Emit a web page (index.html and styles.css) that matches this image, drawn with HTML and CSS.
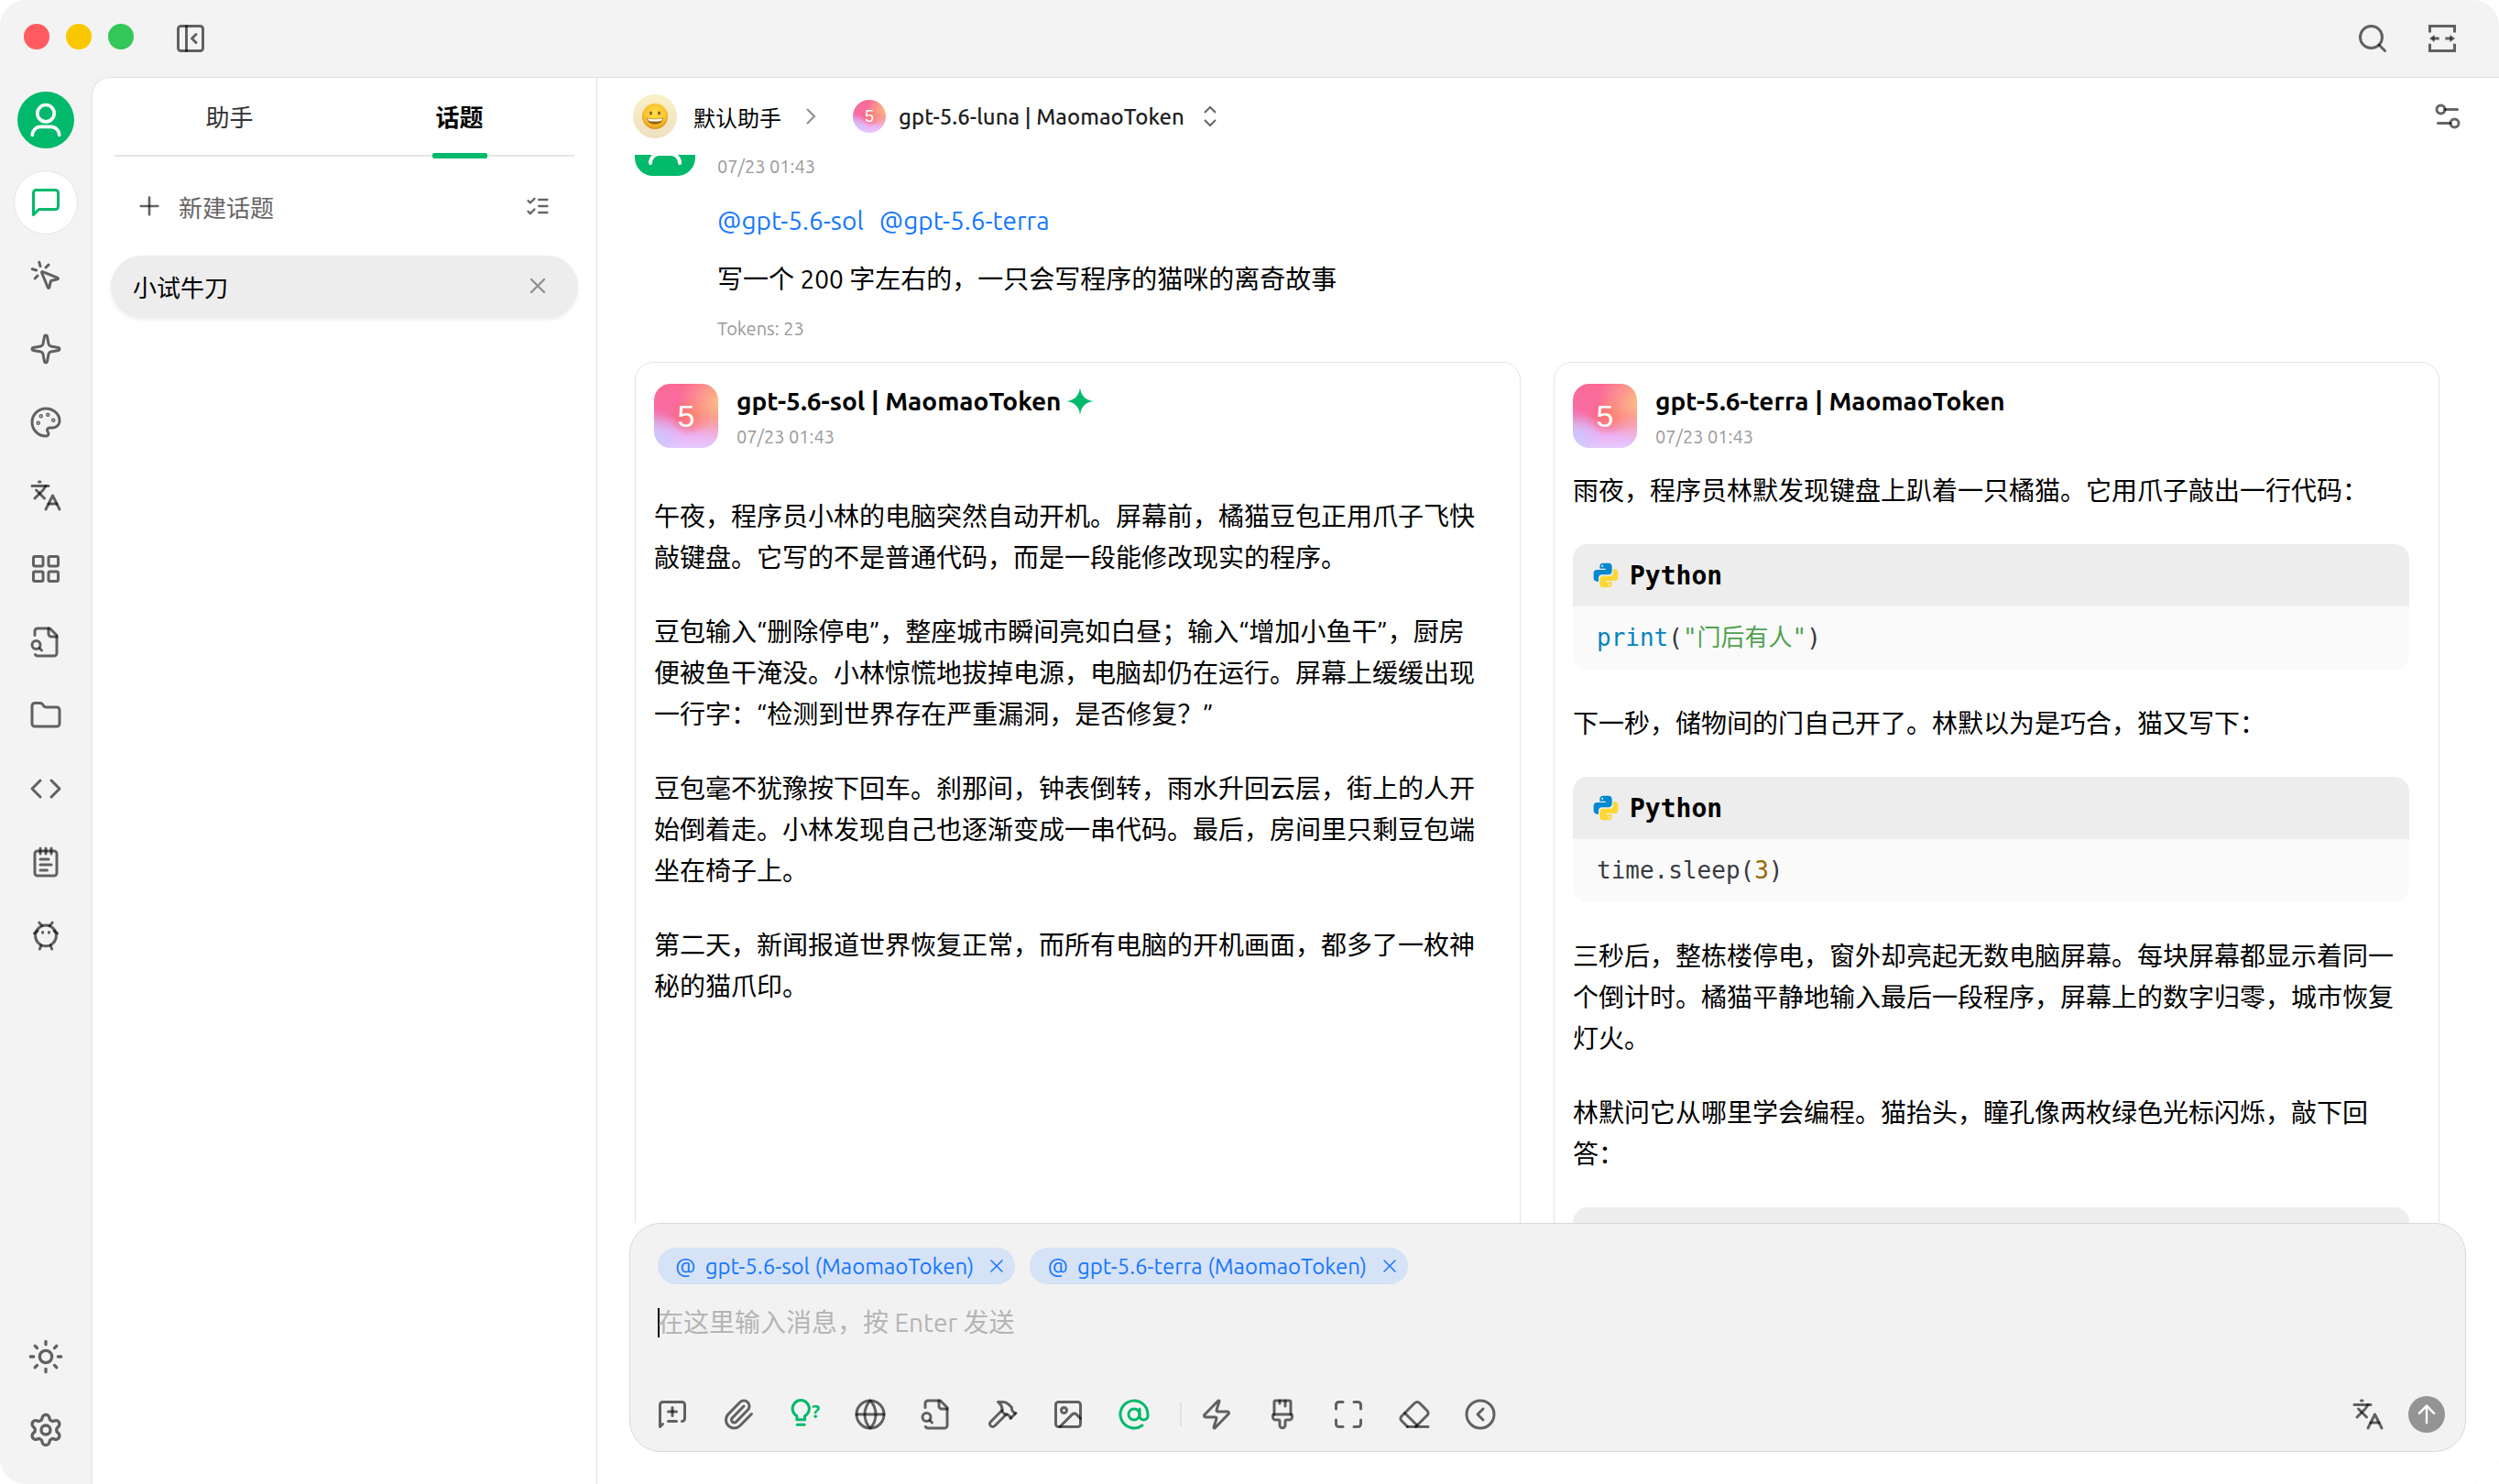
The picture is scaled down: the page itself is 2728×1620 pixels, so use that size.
FILE: index.html
```html
<!DOCTYPE html>
<html lang="zh-CN">
<head>
    <meta charset="UTF-8">
    <meta name="viewport" content="width=device-width, initial-scale=1.0">
    <title>小试牛刀</title>
    <link rel="stylesheet" href="styles.css">
</head>
<body>
    <!-- shared icons -->
    <svg class="sprite" aria-hidden="true">
        <symbol id="i-translate" viewBox="0 0 24 24"><path d="m5 8 6 6"/><path d="m4 14 6-6 2-3"/><path d="M2 5h12"/><path d="M7 2h1"/><path d="m22 22-5-10-5 10"/><path d="M14 18h6"/></symbol>
        <symbol id="i-file-search" viewBox="0 0 24 24"><path d="M14 2v4a2 2 0 0 0 2 2h4"/><path d="M4.268 21a2 2 0 0 0 1.727 1H18a2 2 0 0 0 2-2V7l-5-5H6a2 2 0 0 0-2 2v3"/><path d="m9 18-1.5-1.5"/><circle cx="5" cy="14" r="3"/></symbol>
        <symbol id="i-user" viewBox="0 0 24 24"><circle cx="12" cy="8" r="5"/><path d="M20 21a5 5 0 0 0-5-5H9a5 5 0 0 0-5 5"/></symbol>
        <symbol id="i-close" viewBox="0 0 24 24"><path d="M18 6 6 18M6 6l12 12"/></symbol>
        <symbol id="i-python" viewBox="0 0 24 24"><path fill="#0288d1" d="M9.86 2A2.86 2.86 0 0 0 7 4.86v1.68h4.29c.39 0 .71.57.71.96H4.86A2.86 2.86 0 0 0 2 10.36v3.781a2.86 2.86 0 0 0 2.86 2.86h1.18v-2.68a2.85 2.85 0 0 1 2.85-2.86h5.25c1.58 0 2.86-1.271 2.86-2.851V4.86A2.86 2.86 0 0 0 14.14 2zm-.72 1.61c.4 0 .72.12.72.71s-.32.891-.72.891c-.39 0-.71-.3-.71-.89s.32-.711.71-.711z"/><path fill="#fdd835" d="M17.959 7v2.68a2.85 2.85 0 0 1-2.85 2.859H9.86A2.85 2.85 0 0 0 7 15.389v3.75a2.86 2.86 0 0 0 2.86 2.86h4.28A2.86 2.86 0 0 0 17 19.14v-1.68h-4.291c-.39 0-.709-.57-.709-.96h7.14A2.86 2.86 0 0 0 22 13.64V9.86A2.86 2.86 0 0 0 19.14 7zm-3.099 11.789c.39 0 .71.3.71.89a.71.71 0 0 1-.71.71c-.4 0-.72-.12-.72-.71s.32-.89.72-.89z"/></symbol>
    </svg>

    <div class="window">
        <header class="titlebar">
            <div class="lights">
                <span class="light red"></span>
                <span class="light yellow"></span>
                <span class="light green"></span>
            </div>
            <button class="icon-btn" aria-label="收起侧边栏"><svg class="icon" viewBox="0 0 24 24"><rect x="3" y="3" width="18" height="18" rx="2"/><path d="M9 3v18"/><path d="m16 15-3-3 3-3"/></svg></button>
            <div class="titlebar-right">
                <button class="icon-btn" aria-label="搜索"><svg class="icon" viewBox="0 0 24 24"><circle cx="11" cy="11" r="8"/><path d="m21 21-4.3-4.3"/></svg></button>
                <button class="icon-btn" aria-label="宽屏"><svg class="icon square" viewBox="0 0 24 24"><path d="M3 7.6V3h18v4.6"/><path d="M3 15.8V21h18v-5.2"/><path d="M5 12h4.8M14.2 12H19"/><path class="solid" d="M2.6 12 6.4 9.4v5.2zM21.4 12l-3.8-2.6v5.2z"/></svg></button>
            </div>
        </header>

        <div class="body">
            <nav class="rail">
                <button class="me" aria-label="我"><svg class="icon" ><use href="#i-user"/></svg></button>
                <button class="rail-btn active" aria-label="聊天"><svg class="icon" viewBox="0 0 24 24"><path d="M21 15a2 2 0 0 1-2 2H7l-4 4V5a2 2 0 0 1 2-2h14a2 2 0 0 1 2 2z"/></svg></button>
                <button class="rail-btn" aria-label="智能体"><svg class="icon" viewBox="0 0 24 24"><path d="M14 4.1 12 6"/><path d="m5.1 8-2.9-.8"/><path d="m6 12-1.9 2"/><path d="M7.2 2.2 8 5.1"/><path d="M9.037 9.69a.498.498 0 0 1 .653-.653l11 4.5a.5.5 0 0 1-.074.949l-4.349 1.041a1 1 0 0 0-.74.739l-1.04 4.35a.5.5 0 0 1-.95.074z"/></svg></button>
                <button class="rail-btn" aria-label="助手库"><svg class="icon" viewBox="0 0 24 24"><path d="M11.017 2.814a1 1 0 0 1 1.966 0l1.051 5.558a2 2 0 0 0 1.594 1.594l5.558 1.051a1 1 0 0 1 0 1.966l-5.558 1.051a2 2 0 0 0-1.594 1.594l-1.051 5.558a1 1 0 0 1-1.966 0l-1.051-5.558a2 2 0 0 0-1.594-1.594l-5.558-1.051a1 1 0 0 1 0-1.966l5.558-1.051a2 2 0 0 0 1.594-1.594z"/></svg></button>
                <button class="rail-btn" aria-label="绘画"><svg class="icon" viewBox="0 0 24 24"><path d="M12 22a1 1 0 0 1 0-20 10 9 0 0 1 10 9 5 5 0 0 1-5 5h-2.25a1.75 1.75 0 0 0-1.4 2.8l.3.4a1.75 1.75 0 0 1-1.4 2.8z"/><circle cx="13.5" cy="6.5" r=".5"/><circle cx="17.5" cy="10.5" r=".5"/><circle cx="6.5" cy="12.5" r=".5"/><circle cx="8.5" cy="7.5" r=".5"/></svg></button>
                <button class="rail-btn" aria-label="翻译"><svg class="icon"><use href="#i-translate"/></svg></button>
                <button class="rail-btn" aria-label="小程序"><svg class="icon" viewBox="0 0 24 24"><rect x="3" y="3" width="7" height="7" rx="1"/><rect x="14" y="3" width="7" height="7" rx="1"/><rect x="14" y="14" width="7" height="7" rx="1"/><rect x="3" y="14" width="7" height="7" rx="1"/></svg></button>
                <button class="rail-btn" aria-label="知识库"><svg class="icon"><use href="#i-file-search"/></svg></button>
                <button class="rail-btn" aria-label="文件"><svg class="icon" viewBox="0 0 24 24"><path d="M20 20a2 2 0 0 0 2-2V8a2 2 0 0 0-2-2h-7.9a2 2 0 0 1-1.69-.9L9.6 3.9A2 2 0 0 0 7.93 3H4a2 2 0 0 0-2 2v13a2 2 0 0 0 2 2Z"/></svg></button>
                <button class="rail-btn" aria-label="代码"><svg class="icon" viewBox="0 0 24 24"><path d="m16 18 6-6-6-6"/><path d="m8 6-6 6 6 6"/></svg></button>
                <button class="rail-btn" aria-label="笔记"><svg class="icon" viewBox="0 0 24 24"><path d="M8 2v4"/><path d="M12 2v4"/><path d="M16 2v4"/><rect x="4" y="4" width="16" height="18" rx="2"/><path d="M8 10h6"/><path d="M8 14h8"/><path d="M8 18h5"/></svg></button>
                <button class="rail-btn" aria-label="OpenClaw"><svg class="icon" viewBox="0 0 24 24"><circle cx="12" cy="12.3" r="7.6"/><path d="M7.2 2.8 9.2 5"/><path d="M16.8 2.8 14.8 5"/><path d="M3.6 10.6 6 8.8"/><path d="M20.4 10.6 18 8.8"/><path d="M8.6 19.4 7.6 22"/><path d="M15.4 19.4 16.4 22"/><path d="M9.7 9.6v.6"/><path d="M14.3 9.6v.6"/></svg></button>
                <div class="rail-bottom">
                    <button class="rail-btn" aria-label="主题"><svg class="icon large" viewBox="0 0 24 24"><circle cx="12" cy="12" r="4"/><path d="M12 2v2M12 20v2M4.93 4.93l1.41 1.41M17.66 17.66l1.41 1.41M2 12h2M20 12h2M6.34 17.66l-1.41 1.41M19.07 4.93l-1.41 1.41"/></svg></button>
                    <button class="rail-btn" aria-label="设置"><svg class="icon large" viewBox="0 0 24 24"><path d="M9.671 4.136a2.34 2.34 0 0 1 4.659 0 2.34 2.34 0 0 0 3.319 1.915 2.34 2.34 0 0 1 2.33 4.033 2.34 2.34 0 0 0 0 3.831 2.34 2.34 0 0 1-2.33 4.033 2.34 2.34 0 0 0-3.319 1.915 2.34 2.34 0 0 1-4.659 0 2.34 2.34 0 0 0-3.32-1.915 2.34 2.34 0 0 1-2.33-4.033 2.34 2.34 0 0 0 0-3.831A2.34 2.34 0 0 1 6.35 6.051a2.34 2.34 0 0 0 3.319-1.915"/><circle cx="12" cy="12" r="3"/></svg></button>
                </div>
            </nav>

            <div class="content">
                <aside class="topics">
                    <div class="tabs" role="tablist">
                        <button class="tab" role="tab" aria-selected="false">助手</button>
                        <button class="tab active" role="tab" aria-selected="true">话题</button>
                    </div>
                    <div class="new-row">
                        <button class="new-topic"><svg class="icon mid" viewBox="0 0 24 24"><path d="M5 12h14"/><path d="M12 5v14"/></svg>新建话题</button>
                        <button class="icon-btn" aria-label="管理"><svg class="icon small" viewBox="0 0 24 24"><path d="m3 17 2 2 4-4"/><path d="m3 7 2 2 4-4"/><path d="M13 6h8"/><path d="M13 12h8"/><path d="M13 18h8"/></svg></button>
                    </div>
                    <div class="topic">
                        <a class="topic-link" href="#">小试牛刀</a>
                        <button class="icon-btn faint" aria-label="删除"><svg class="icon small"><use href="#i-close"/></svg></button>
                    </div>
                </aside>

                <main class="chat">
                    <div class="chat-header">
                        <button class="assistant">
                            <span class="emoji"><svg viewBox="0 0 28 28">
                                <defs><radialGradient id="face" cx=".5" cy=".4" r=".6"><stop offset="0" stop-color="#ffe04d"/><stop offset=".7" stop-color="#fbc22d"/><stop offset="1" stop-color="#dd9218"/></radialGradient></defs>
                                <circle cx="14" cy="14" r="14" fill="url(#face)"/>
                                <ellipse cx="9.5" cy="10.5" rx="1.5" ry="2" fill="#8a5a10"/><ellipse cx="18.5" cy="10.5" rx="1.5" ry="2" fill="#8a5a10"/>
                                <path d="M5 15.5q9 2.4 18 0q-1 7.3-9 7.300t-9-7.300z" fill="#9a6216"/><path d="M5.900 16.300q8.100 2 16.200 0q-.4 2.400-1.600 2.700q-6.500 1-13 0q-1.300-.4-1.600-2.700z" fill="#fff"/>
                            </svg></span>
                            默认助手
                        </button>
                        <svg class="crumb" viewBox="0 0 12 20"><path d="m2 2 8 8-8 8"/></svg>
                        <button class="model">
                            <span class="logo round">5</span>
                            gpt-5.6-luna | MaomaoToken
                            <svg class="updown" viewBox="0 0 16 24"><path d="m2 8 6-6 6 6M2 16l6 6 6-6"/></svg>
                        </button>
                        <button class="icon-btn prefs" aria-label="对话设置"><svg class="icon" viewBox="0 0 24 24"><path d="M10 7h9"/><path d="M14 17H5"/><circle cx="17" cy="17" r="3"/><circle cx="7" cy="7" r="3"/></svg></button>
                    </div>

                    <div class="messages">
                        <article class="question">
                            <div class="user-avatar"><svg class="icon"><use href="#i-user"/></svg></div>
                            <div class="question-body">
                                <time class="time">07/23 01:43</time>
                                <p class="mentions"><a href="#">@gpt-5.6-sol</a><a href="#">@gpt-5.6-terra</a></p>
                                <p>写一个 200 字左右的，一只会写程序的猫咪的离奇故事</p>
                                <div class="tokens">Tokens: 23</div>
                            </div>
                        </article>

                        <div class="answers">
                            <article class="card">
                                <header class="card-header">
                                    <span class="logo">5</span>
                                    <div class="card-title">
                                        <h2>gpt-5.6-sol | MaomaoToken<svg class="star" viewBox="0 0 30 30"><path d="M15 0q1.500 13.500 15 15q-13.500 1.500-15 15q-1.500-13.500-15-15q13.500-1.500 15-15z"/></svg></h2>
                                        <time class="time">07/23 01:43</time>
                                    </div>
                                </header>
                                <div class="markdown lead">
                                    <p>午夜，程序员小林的电脑突然自动开机。屏幕前，橘猫豆包正用爪子飞快敲键盘。它写的不是普通代码，而是一段能修改现实的程序。</p>
                                    <p>豆包输入“删除停电”，整座城市瞬间亮如白昼；输入“增加小鱼干”，厨房便被鱼干淹没。小林惊慌地拔掉电源，电脑却仍在运行。屏幕上缓缓出现一行字：“检测到世界存在严重漏洞，是否修复？”</p>
                                    <p>豆包毫不犹豫按下回车。刹那间，钟表倒转，雨水升回云层，街上的人开始倒着走。小林发现自己也逐渐变成一串代码。最后，房间里只剩豆包端坐在椅子上。</p>
                                    <p>第二天，新闻报道世界恢复正常，而所有电脑的开机画面，都多了一枚神秘的猫爪印。</p>
                                </div>
                            </article>

                            <article class="card">
                                <header class="card-header">
                                    <span class="logo">5</span>
                                    <div class="card-title">
                                        <h2>gpt-5.6-terra | MaomaoToken</h2>
                                        <time class="time">07/23 01:43</time>
                                    </div>
                                </header>
                                <div class="markdown">
                                    <p>雨夜，程序员林默发现键盘上趴着一只橘猫。它用爪子敲出一行代码：</p>
                                    <div class="code">
                                        <div class="code-header"><svg class="lang"><use href="#i-python"/></svg>Python</div>
                                        <pre><code><span class="fn">print</span>(<span class="str">"门后有人"</span>)</code></pre>
                                    </div>
                                    <p>下一秒，储物间的门自己开了。林默以为是巧合，猫又写下：</p>
                                    <div class="code">
                                        <div class="code-header"><svg class="lang"><use href="#i-python"/></svg>Python</div>
                                        <pre><code>time.sleep(<span class="num">3</span>)</code></pre>
                                    </div>
                                    <p>三秒后，整栋楼停电，窗外却亮起无数电脑屏幕。每块屏幕都显示着同一个倒计时。橘猫平静地输入最后一段程序，屏幕上的数字归零，城市恢复灯火。</p>
                                    <p>林默问它从哪里学会编程。猫抬头，瞳孔像两枚绿色光标闪烁，敲下回答：</p>
                                    <div class="code">
                                        <div class="code-header"></div>
                                    </div>
                                </div>
                            </article>
                        </div>
                    </div>

                    <form class="composer">
                        <div class="chips">
                            <span class="chip"><span>@</span>gpt-5.6-sol (MaomaoToken)<button type="button" aria-label="移除 gpt-5.6-sol"><svg class="icon chip-x"><use href="#i-close"/></svg></button></span>
                            <span class="chip"><span>@</span>gpt-5.6-terra (MaomaoToken)<button type="button" aria-label="移除 gpt-5.6-terra"><svg class="icon chip-x"><use href="#i-close"/></svg></button></span>
                        </div>
                        <div class="field">
                            <span class="caret"></span>
                            <textarea aria-label="消息" placeholder="在这里输入消息，按 Enter 发送"></textarea>
                        </div>
                        <div class="toolbar">
                            <button type="button" class="icon-btn" aria-label="新话题"><svg class="icon" viewBox="0 0 24 24"><path d="m5 19-2 2V5c0-1.1.9-2 2-2h14a2 2 0 0 1 2 2v10a2 2 0 0 1-2 2"/><path d="M9 10h6"/><path d="M12 7v6"/><path d="M9 17h6"/></svg></button>
                            <button type="button" class="icon-btn" aria-label="附件"><svg class="icon" viewBox="0 0 24 24"><path d="m16 6-8.414 8.586a2 2 0 0 0 2.829 2.829l8.414-8.586a4 4 0 1 0-5.657-5.657l-8.379 8.551a6 6 0 1 0 8.485 8.485l8.379-8.551"/></svg></button>
                            <button type="button" class="icon-btn on" aria-label="思考"><svg class="icon bulb" viewBox="0 0 24 24"><path d="M6.600 15.800v-2.600a6.100 6.100 0 1 1 5.800 0v2.600z"/><path d="M6.900 19.500h5.200"/><text x="17.400" y="14.800">?</text></svg></button>
                            <button type="button" class="icon-btn" aria-label="联网"><svg class="icon" viewBox="0 0 24 24"><circle cx="12" cy="12" r="10"/><path d="M12 2a14.5 14.5 0 0 0 0 20 14.5 14.5 0 0 0 0-20"/><path d="M2 12h20"/></svg></button>
                            <button type="button" class="icon-btn" aria-label="知识库"><svg class="icon"><use href="#i-file-search"/></svg></button>
                            <button type="button" class="icon-btn" aria-label="工具"><svg class="icon" viewBox="0 0 24 24"><path d="m15 12-8.373 8.373a1 1 0 1 1-3-3L12 9"/><path d="m18 15 4-4"/><path d="m21.5 11.5-1.914-1.914A2 2 0 0 1 19 8.172V7l-2.26-2.26a6 6 0 0 0-4.202-1.756L9 2.96l.92.82A6.18 6.18 0 0 1 12 8.4V10l2 2h1.172a2 2 0 0 1 1.414.586L18.5 14.5"/></svg></button>
                            <button type="button" class="icon-btn" aria-label="图片"><svg class="icon" viewBox="0 0 24 24"><rect x="3" y="3" width="18" height="18" rx="2"/><circle cx="9" cy="9" r="2"/><path d="m21 15-3.086-3.086a2 2 0 0 0-2.828 0L6 21"/></svg></button>
                            <button type="button" class="icon-btn on" aria-label="提及模型"><svg class="icon" viewBox="0 0 24 24"><circle cx="12" cy="12" r="4"/><path d="M16 8v5a3 3 0 0 0 6 0v-1a10 10 0 1 0-4 8"/></svg></button>
                            <span class="divider"></span>
                            <button type="button" class="icon-btn" aria-label="快捷短语"><svg class="icon" viewBox="0 0 24 24"><path d="M4 14a1 1 0 0 1-.78-1.630l9.900-10.200a.5.5 0 0 1 .86.46l-1.920 6.020A1 1 0 0 0 13 10h7a1 1 0 0 1 .78 1.630l-9.900 10.200a.5.5 0 0 1-.86-.46l1.920-6.020A1 1 0 0 0 11 14z"/></svg></button>
                            <button type="button" class="icon-btn" aria-label="清空消息"><svg class="icon" viewBox="0 0 24 24"><path d="M10 2v2"/><path d="M14 2v4"/><path d="M17 2a1 1 0 0 1 1 1v9H6V3a1 1 0 0 1 1-1z"/><path d="M6 12a1 1 0 0 0-1 1v1a2 2 0 0 0 2 2h2a1 1 0 0 1 1 1v2.900a2 2 0 1 0 4 0V17a1 1 0 0 1 1-1h2a2 2 0 0 0 2-2v-1a1 1 0 0 0-1-1"/></svg></button>
                            <button type="button" class="icon-btn" aria-label="展开"><svg class="icon" viewBox="0 0 24 24"><path d="M8 3H5a2 2 0 0 0-2 2v3"/><path d="M21 8V5a2 2 0 0 0-2-2h-3"/><path d="M3 16v3a2 2 0 0 0 2 2h3"/><path d="M16 21h3a2 2 0 0 0 2-2v-3"/></svg></button>
                            <button type="button" class="icon-btn" aria-label="清除上下文"><svg class="icon" viewBox="0 0 24 24"><path d="m7 21-4.300-4.300c-1-1-1-2.500 0-3.400l9.600-9.600c1-1 2.500-1 3.400 0l5.600 5.600c1 1 1 2.500 0 3.400L13 21"/><path d="M22 21H7"/><path d="m5 11 9 9"/></svg></button>
                            <button type="button" class="icon-btn" aria-label="收起工具"><svg class="icon" viewBox="0 0 24 24"><circle cx="12" cy="12" r="10"/><path d="m14 16-4-4 4-4"/></svg></button>
                            <div class="toolbar-right">
                                <button type="button" class="icon-btn" aria-label="翻译"><svg class="icon"><use href="#i-translate"/></svg></button>
                                <button type="submit" class="send" aria-label="发送"><svg class="icon small" viewBox="0 0 24 24"><path d="m5 11 7-7 7 7"/><path d="M12 20V4"/></svg></button>
                            </div>
                        </div>
                    </form>
                </main>
            </div>
        </div>
    </div>
</body>
</html>
```

FILE: styles.css
```css
* {
    box-sizing: border-box;
    margin: 0;
    padding: 0;
}

body {
    background-color: #fff;
    color: #000;
    font-family: Ubuntu, "Noto Sans", "Noto Sans CJK SC", sans-serif;
    font-size: 28px;
}

button {
    border: none;
    background: none;
    color: inherit;
    font: inherit;
    cursor: pointer;
}

a {
    color: inherit;
    text-decoration: none;
}

.sprite {
    display: none;
}

.window {
    display: flex;
    flex-direction: column;
    height: 100vh;
    overflow: hidden;
    background-color: #f3f3f3;
    border-radius: 28px;
}

/* icons */
.icon {
    display: block;
    width: 36px;
    height: 36px;
    fill: none;
    stroke: rgba(0, 0, 0, 0.6);
    stroke-width: 2;
    stroke-linecap: round;
    stroke-linejoin: round;
    overflow: visible;
}

.icon.large {
    width: 40px;
    height: 40px;
}

.icon.mid {
    width: 32px;
    height: 32px;
}

.icon.small {
    width: 28px;
    height: 28px;
}

.icon.square {
    stroke-linecap: butt;
    stroke-linejoin: miter;
}

.solid {
    fill: rgba(0, 0, 0, 0.6);
    stroke: none;
}

.icon-btn {
    display: flex;
}

.on .icon {
    stroke: #00b96b;
}

.bulb text {
    fill: #00b96b;
    stroke: none;
    font-size: 14px;
    font-weight: 600;
}

/* title bar */
.titlebar {
    display: flex;
    align-items: center;
    flex: none;
    height: 84px;
    padding: 0 44px 0 26px;
}

.lights {
    display: flex;
    gap: 18px;
    margin-right: 44px;
    padding-bottom: 4px;
}

.light {
    width: 28px;
    height: 28px;
    border-radius: 50%;
}

.red {
    background-color: #ff5b60;
}

.yellow {
    background-color: #fac800;
}

.green {
    background-color: #34c759;
}

.titlebar-right {
    display: flex;
    gap: 40px;
    margin-left: auto;
}

/* left rail */
.body {
    display: flex;
    flex: 1;
    min-height: 0;
}

.rail {
    display: flex;
    flex-direction: column;
    align-items: center;
    gap: 10px;
    flex: none;
    width: 100px;
    padding: 16px 0 24px;
}

.me {
    display: flex;
    align-items: center;
    justify-content: center;
    width: 62px;
    height: 62px;
    margin-bottom: 14px;
    border-radius: 50%;
    background-color: #00b96b;
}

.me .icon {
    width: 44px;
    height: 44px;
    stroke: #fff;
}

.rail-btn {
    display: flex;
    align-items: center;
    justify-content: center;
    width: 70px;
    height: 70px;
    border-radius: 50%;
}

.rail-btn.active {
    background-color: #fff;
    border: 1px solid #e4e4e4;
}

.rail-btn.active .icon {
    stroke: #00b96b;
}

.rail-bottom {
    display: flex;
    flex-direction: column;
    gap: 10px;
    margin-top: auto;
}

.content {
    display: flex;
    flex: 1;
    min-width: 0;
    background-color: #fff;
    border-top: 1px solid #e2e2e2;
    border-left: 1px solid #e2e2e2;
    border-top-left-radius: 20px;
}

/* topic list */
.topics {
    flex: none;
    width: 551px;
    padding: 0 20px;
    border-right: 1px solid #e2e2e2;
}

.tabs {
    display: flex;
    margin: 0 4px;
    border-bottom: 2px solid #e5e5e5;
}

.tab {
    position: relative;
    flex: 1;
    height: 84px;
    padding-bottom: 2px;
    font-size: 26px;
    color: #333;
}

.tab.active {
    color: #000;
    font-weight: 700;
}

.tab.active::after {
    content: "";
    position: absolute;
    left: 50%;
    bottom: -4px;
    width: 60px;
    height: 6px;
    margin-left: -30px;
    border-radius: 2px;
    background-color: #00b96b;
}

.new-row {
    display: flex;
    align-items: center;
    justify-content: space-between;
    height: 108px;
    padding: 0 30px 0 26px;
}

.new-topic {
    display: flex;
    align-items: center;
    gap: 16px;
    font-size: 26px;
    color: #666;
}

.topic {
    display: flex;
    align-items: center;
    justify-content: space-between;
    height: 68px;
    padding: 0 30px 2px 24px;
    border-radius: 34px;
    background-color: #ededed;
    box-shadow: 0 2px 4px rgba(0, 0, 0, 0.08);
    font-size: 26px;
}

.faint .icon {
    stroke: rgba(0, 0, 0, 0.4);
}

/* chat column */
.chat {
    display: flex;
    flex-direction: column;
    flex: 1;
    min-width: 0;
}

.chat-header {
    display: flex;
    align-items: center;
    flex: none;
    height: 84px;
    padding: 0 38px 0 39px;
    font-size: 24px;
}

.assistant,
.model {
    display: flex;
    align-items: center;
    gap: 18px;
}

.model {
    gap: 14px;
    color: #1f1f1f;
    font-weight: 500;
}

.emoji {
    display: flex;
    align-items: center;
    justify-content: center;
    width: 48px;
    height: 48px;
    border-radius: 50%;
    background: linear-gradient(#fbf0c6, #eedfc2);
}

.emoji svg {
    width: 28px;
    height: 28px;
}

.crumb {
    width: 12px;
    height: 20px;
    margin: 0 40px 0 26px;
    fill: none;
    stroke: #8c8c8c;
    stroke-width: 2;
}

.updown {
    width: 16px;
    height: 24px;
    margin-left: 6px;
    fill: none;
    stroke: #666;
    stroke-width: 2;
}

.prefs {
    margin-left: auto;
}

.logo {
    display: flex;
    align-items: center;
    justify-content: center;
    flex: none;
    width: 70px;
    height: 70px;
    border-radius: 18px;
    background:
        radial-gradient(circle at 100% 30%, #fdbb82 0, rgba(253, 187, 130, 0) 50%),
        radial-gradient(circle at 0 85%, #c8c8ff 0, rgba(200, 200, 255, 0) 35%),
        radial-gradient(ellipse at 55% 50%, #fb6a64 0, rgba(251, 106, 100, 0) 45%),
        linear-gradient(#fa6a94 0, #f86da8 50%, #eeaaf0 75%, #e6cbff 100%);
    color: #fff;
    font-family: "Liberation Sans", sans-serif;
    font-size: 34px;
}

.logo.round {
    width: 36px;
    height: 36px;
    border-radius: 50%;
    font-size: 18px;
}

.messages {
    flex: 1;
    min-height: 0;
    overflow: hidden;
    padding: 0 65px 0 41px;
    line-height: 45px;
}

/* the list is scrolled a little past the first message */
.question {
    display: flex;
    gap: 24px;
    margin-top: -47px;
}

.user-avatar {
    display: flex;
    align-items: center;
    justify-content: center;
    flex: none;
    width: 66px;
    height: 70px;
    padding-top: 6px;
    border-radius: 20px;
    background-color: #00b96b;
}

.user-avatar .icon {
    width: 48px;
    height: 48px;
    stroke: #fff;
}

.question-body {
    padding-top: 48px;
}

.time,
.tokens {
    display: block;
    color: #999;
    font-size: 20px;
    line-height: 24px;
}

.mentions {
    display: flex;
    gap: 17px;
    margin: 24px 0 19px;
    color: #1677ff;
}

.tokens {
    margin: 20px 0 24px;
}

.answers {
    display: grid;
    grid-template-columns: 1fr 1fr;
    gap: 36px;
}

.card {
    min-width: 0;
    padding: 23px 32px 23px 20px;
    border: 1px solid #e4e4e4;
    border-radius: 20px;
}

.card-header {
    display: flex;
    gap: 20px;
    margin-bottom: 24px;
}

.card-title {
    display: flex;
    flex-direction: column;
    justify-content: space-between;
}

.card-title h2 {
    display: flex;
    align-items: center;
    gap: 6px;
    font-size: 28px;
    font-weight: 700;
    line-height: 38px;
}

.star {
    width: 30px;
    height: 30px;
    fill: #00b96b;
}

.markdown {
    display: flex;
    flex-direction: column;
    gap: 36px;
}

.markdown.lead {
    padding: 28px 12px 0 0;
}

.code {
    overflow: hidden;
    border-radius: 16px;
    background-color: #fafafa;
    font-family: "DejaVu Sans Mono", "Noto Sans CJK SC", monospace;
}

.code-header {
    display: flex;
    align-items: center;
    gap: 10px;
    height: 68px;
    padding: 0 20px;
    background-color: #ededed;
    font-weight: 700;
}

.lang {
    width: 32px;
    height: 32px;
}

.code pre {
    height: 69px;
    padding: 0 26px;
    color: #383a42;
    font: inherit;
    font-size: 26px;
    line-height: 69px;
}

.code code {
    font: inherit;
}

.fn {
    color: #0184bc;
}

.str {
    color: #50a14f;
}

.num {
    color: #986801;
}

/* message box */
.composer {
    display: flex;
    flex-direction: column;
    flex: none;
    height: 250px;
    margin: 0 36px 35px 35px;
    padding: 26px 22px 20px 28px;
    border: 1px solid #d9d9d9;
    border-radius: 34px;
    background-color: #f2f2f2;
}

.chips {
    display: flex;
    gap: 16px;
    padding-left: 2px;
}

.chip {
    display: flex;
    align-items: center;
    height: 40px;
    padding: 0 8px 0 19px;
    border-radius: 20px;
    background-color: #d6e2f5;
    color: #1677ff;
    font-size: 24px;
    gap: 10px;
}

.chip button {
    margin-left: 3px;
}

.icon.chip-x {
    width: 24px;
    height: 24px;
    stroke: #1677ff;
    stroke-width: 1.5;
}

.field {
    display: flex;
    flex: 1;
    padding: 21px 0 0 2px;
}

.caret {
    width: 2px;
    height: 32px;
    margin: 5px -2px 0 0;
    background-color: #000;
}

.field textarea {
    flex: 1;
    border: none;
    outline: none;
    resize: none;
    background: none;
    font: inherit;
    line-height: 42px;
}

.field textarea::placeholder {
    color: #b5b5b5;
}

.toolbar {
    display: flex;
    align-items: center;
    gap: 36px;
    height: 40px;
}

.divider {
    width: 2px;
    height: 26px;
    margin: 0 -16px 0 -4px;
    background-color: #e2e2e2;
}

.toolbar-right {
    display: flex;
    align-items: center;
    gap: 26px;
    margin-left: auto;
}

.send {
    display: flex;
    align-items: center;
    justify-content: center;
    width: 40px;
    height: 40px;
    border-radius: 50%;
    background-color: #949494;
}

.send .icon {
    stroke: #fff;
}
```
